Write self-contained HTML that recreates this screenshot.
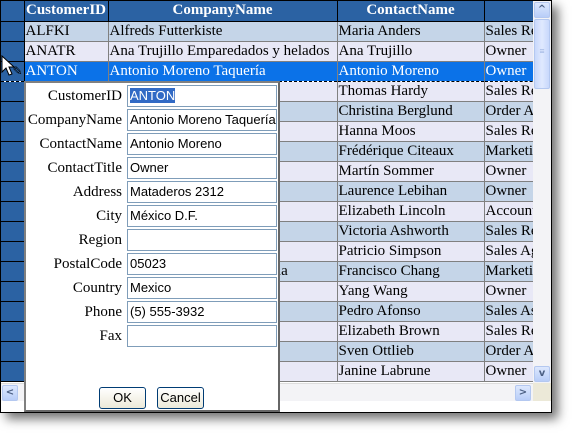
<!DOCTYPE html>
<html><head><meta charset="utf-8"><style>
*{margin:0;padding:0;box-sizing:border-box}
body{width:572px;height:433px;background:#fff;position:relative;overflow:hidden;font-family:"Liberation Serif",serif;font-size:15px}
.win{position:absolute;left:0;top:0;width:552px;height:413px;border:1px solid #000;background:#fff;box-shadow:6px 6px 10px rgba(0,0,0,.55);overflow:hidden}
.grid{position:absolute;left:0;top:0;width:533px;height:381px;overflow:hidden}
table{border-collapse:collapse;table-layout:fixed;width:720px}
td,th{height:20px;border-right:1px solid #808080;border-bottom:1px solid #808080;white-space:nowrap;overflow:hidden;padding:0 1px;font-weight:normal;text-align:left;line-height:19px}
th{background:#2b62a3;color:#fff;font-weight:bold;text-align:center;border-color:#000;font-size:15px;padding:0}
td.s{background:#2b62a3;border-right:1px solid #000;border-bottom:1px solid #000}
tr.a td{background:#c5d5e8}
tr.b td{background:#e8e8f6}
tr.sel td{background:#0b72e8;color:#fff;border-bottom:1px dashed #000}
tr td.s{background:#2b62a3!important}
.vs{position:absolute;left:532px;top:0;width:18px;height:382px;background:#f3f3f6}
.hs{position:absolute;left:0;top:382px;width:533px;height:18px;background:#f3f3f6;border-top:1px solid #ddd}
.corner{position:absolute;left:532px;top:382px;width:18px;height:18px;background:#ece9d8}
.btn{position:absolute;width:16px;height:16px;border:1px solid #b4c8f0;border-radius:2px;background:linear-gradient(#dde8fe,#b8cdf8);color:#4d6185;font-size:10px;text-align:center;line-height:14px;font-family:"DejaVu Sans",sans-serif;font-weight:bold}
.thumb{position:absolute;left:1px;top:18px;width:16px;height:70px;border:1px solid #b4c8f0;border-radius:2px;background:linear-gradient(90deg,#c8d8fc,#e0e9fe,#c8d8fc)}
.pop{position:absolute;left:23px;top:80px;width:256px;height:331px;background:#fff;border:2px solid #808080;border-right-color:#666;border-bottom-color:#666}
.lab{position:absolute;right:156px;text-align:right;font-size:15px;color:#000}
.inp{position:absolute;left:101px;width:150px;height:22px;border:1px solid #7f9db9;font-family:"Liberation Sans",sans-serif;font-size:13px;line-height:20px;padding-left:2px;white-space:nowrap;overflow:hidden}
.b2{position:absolute;top:304px;height:22px;border:1px solid #003c74;border-radius:3px;background:linear-gradient(#fff,#ece9d8);font-family:"Liberation Sans",sans-serif;font-size:13px;text-align:center;line-height:20px}
</style></head><body>
<div class="win">
<div class="grid"><table>
<colgroup><col style="width:23px"><col style="width:84px"><col style="width:229px"><col style="width:147px"><col style="width:237px"></colgroup>
<tr><th style="background:#2b62a3"></th><th>CustomerID</th><th>CompanyName</th><th>ContactName</th><th>ContactTitle</th></tr>
<tr class="a"><td class="s"></td><td>ALFKI</td><td>Alfreds Futterkiste</td><td>Maria Anders</td><td>Sales Representative</td></tr>
<tr class="b"><td class="s"></td><td>ANATR</td><td>Ana Trujillo Emparedados y helados</td><td>Ana Trujillo</td><td>Owner</td></tr>
<tr class="sel"><td class="s" style="color:#000;font-size:12px;text-align:right">✎</td><td>ANTON</td><td>Antonio Moreno Taquería</td><td>Antonio Moreno</td><td>Owner</td></tr>
<tr class="b"><td class="s"></td><td>AROUT</td><td>Around the Horn</td><td>Thomas Hardy</td><td>Sales Representative</td></tr>
<tr class="a"><td class="s"></td><td>BERGS</td><td>Berglunds snabbköp</td><td>Christina Berglund</td><td>Order Administrator</td></tr>
<tr class="b"><td class="s"></td><td>BLAUS</td><td>Blauer See</td><td>Hanna Moos</td><td>Sales Representative</td></tr>
<tr class="a"><td class="s"></td><td>BLONP</td><td>Blondel</td><td>Frédérique Citeaux</td><td>Marketing Manager</td></tr>
<tr class="b"><td class="s"></td><td>BOLID</td><td>Bólido</td><td>Martín Sommer</td><td>Owner</td></tr>
<tr class="a"><td class="s"></td><td>BONAP</td><td>Bon app'</td><td>Laurence Lebihan</td><td>Owner</td></tr>
<tr class="b"><td class="s"></td><td>BOTTM</td><td>Bottom-Dollar</td><td>Elizabeth Lincoln</td><td>Accounting Manager</td></tr>
<tr class="a"><td class="s"></td><td>BSBEV</td><td>B's Beverages</td><td>Victoria Ashworth</td><td>Sales Representative</td></tr>
<tr class="b"><td class="s"></td><td>CACTU</td><td>Cactus</td><td>Patricio Simpson</td><td>Sales Agent</td></tr>
<tr class="a"><td class="s"></td><td>CENTC</td><td>Centro comercial Moctezuma</td><td>Francisco Chang</td><td>Marketing Manager</td></tr>
<tr class="b"><td class="s"></td><td>CHOPS</td><td>Chop-suey</td><td>Yang Wang</td><td>Owner</td></tr>
<tr class="a"><td class="s"></td><td>COMMI</td><td>Comércio</td><td>Pedro Afonso</td><td>Sales Associate</td></tr>
<tr class="b"><td class="s"></td><td>CONSH</td><td>Consolidated</td><td>Elizabeth Brown</td><td>Sales Representative</td></tr>
<tr class="a"><td class="s"></td><td>DRACD</td><td>Drachenblut</td><td>Sven Ottlieb</td><td>Order Administrator</td></tr>
<tr class="b"><td class="s"></td><td>DUMON</td><td>Du monde entier</td><td>Janine Labrune</td><td>Owner</td></tr>
</table></div>
<svg style="position:absolute;left:0;top:54px" width="16" height="22"><path d="M1 1 L1 17 L5 13 L8 20 L11 19 L8 12 L13 12 Z" fill="#fff" stroke="#000" stroke-width="1"/></svg>
<div class="vs"><div class="btn" style="left:1px;top:1px">^</div><div class="thumb"><div style="text-align:center;color:#8aa4d8;font-size:9px;margin-top:26px">≡</div></div><div class="btn" style="left:1px;top:365px">v</div></div>
<div class="hs"><div class="btn" style="left:1px;top:1px">&lt;</div><div class="btn" style="left:514px;top:1px">&gt;</div></div>
<div class="corner"></div>
<div class="pop">
<div class="lab" style="top:5px">CustomerID</div><div class="inp" style="top:2px"><span style="background:#316ac5;color:#fff">ANTON</span></div>
<div class="lab" style="top:29px">CompanyName</div><div class="inp" style="top:26px">Antonio Moreno Taquería</div>
<div class="lab" style="top:53px">ContactName</div><div class="inp" style="top:50px">Antonio Moreno</div>
<div class="lab" style="top:77px">ContactTitle</div><div class="inp" style="top:74px">Owner</div>
<div class="lab" style="top:101px">Address</div><div class="inp" style="top:98px">Mataderos 2312</div>
<div class="lab" style="top:125px">City</div><div class="inp" style="top:122px">México D.F.</div>
<div class="lab" style="top:149px">Region</div><div class="inp" style="top:146px"></div>
<div class="lab" style="top:173px">PostalCode</div><div class="inp" style="top:170px">05023</div>
<div class="lab" style="top:197px">Country</div><div class="inp" style="top:194px">Mexico</div>
<div class="lab" style="top:221px">Phone</div><div class="inp" style="top:218px">(5) 555-3932</div>
<div class="lab" style="top:245px">Fax</div><div class="inp" style="top:242px"></div>
<div class="b2" style="left:73px;width:47px">OK</div>
<div class="b2" style="left:131px;width:47px">Cancel</div>
</div>
</div>
</body></html>
